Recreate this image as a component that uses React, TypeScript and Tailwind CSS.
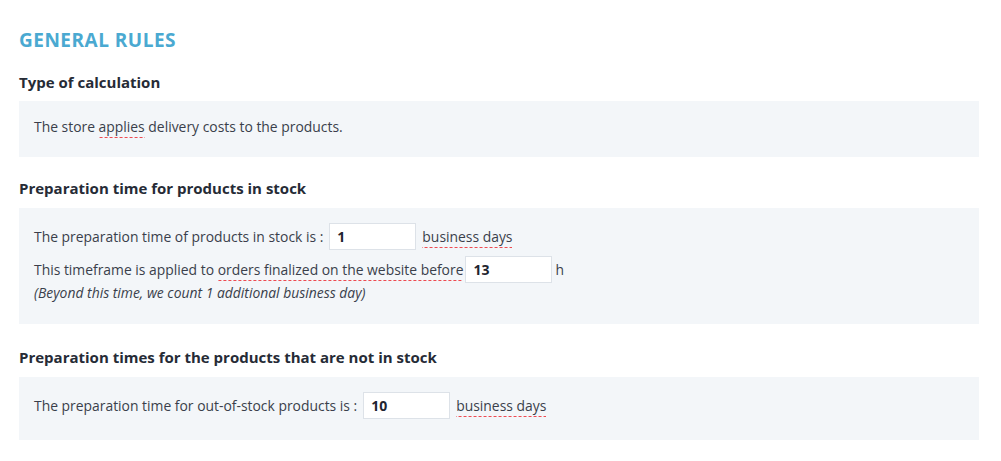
import React from "react";

const U = ({ children }: { children: React.ReactNode }) => (
  <span className="bg-[linear-gradient(to_right,#ee4b52_60%,transparent_60%)] bg-[length:5px_1px] bg-bottom bg-repeat-x pb-[2px]">
    {children}
  </span>
);

const Field = ({ value }: { value: string }) => (
  <span className="inline-flex h-[27px] w-[87px] items-center border border-[#dde2e8] bg-white px-[7px] text-[14px] font-bold text-[#1f2430]">
    {value}
  </span>
);

export default function App() {
  return (
    <div
      className="min-h-[461px] w-[1001px] bg-white pl-[19px] pr-[22px] pt-[29px] text-[13.9px] text-[#3a3f4b]"
      style={{ fontFamily: '"Open Sans", "Liberation Sans", sans-serif' }}
    >
      <h1 className="text-[19px] font-bold leading-[22px] tracking-[0.5px] text-[#4aa9d1]">GENERAL RULES</h1>

      <h2 className="mt-[22px] text-[15px] font-bold leading-[18px] text-[#262b36]">Type of calculation</h2>
      <div className="mt-[10px] flex h-[56px] items-center bg-[#f3f6f9] px-[15px] pb-[4px]">
        <p>
          The store <U>applies</U> delivery costs to the products.
        </p>
      </div>

      <h2 className="mt-[22px] text-[15px] font-bold leading-[18px] text-[#262b36]">
        Preparation time for products in stock
      </h2>
      <div className="mt-[11px] flex h-[116px] flex-col bg-[#f3f6f9] px-[15px] pt-[15px]">
        <div className="flex h-[27px] items-center gap-[6px]">
          <span className="pt-[2px]">The preparation time of products in stock is :</span>
          <Field value="1" />
          <span className="pt-[2px]">
            <U>business days</U>
          </span>
        </div>
        <div className="mt-[6px] flex h-[27px] items-center gap-[2px]">
          <span className="pt-[2px]">
            This timeframe is applied to <U>orders finalized on the website before</U>
          </span>
          <Field value="13" />
          <span className="ml-[1px] pt-[2px]">h</span>
        </div>
        <p className="italic leading-[19px]">(Beyond this time, we count 1 additional business day)</p>
      </div>

      <h2 className="mt-[24px] text-[15px] font-bold leading-[18px] text-[#262b36]">
        Preparation times for the products that are not in stock
      </h2>
      <div className="mt-[11px] flex h-[63px] flex-col bg-[#f3f6f9] px-[15px] pt-[15px]">
        <div className="flex h-[27px] items-center gap-[6px]">
          <span className="pt-[2px]">The preparation time for out-of-stock products is :</span>
          <Field value="10" />
          <span className="pt-[2px]">
            <U>business days</U>
          </span>
        </div>
      </div>
    </div>
  );
}
